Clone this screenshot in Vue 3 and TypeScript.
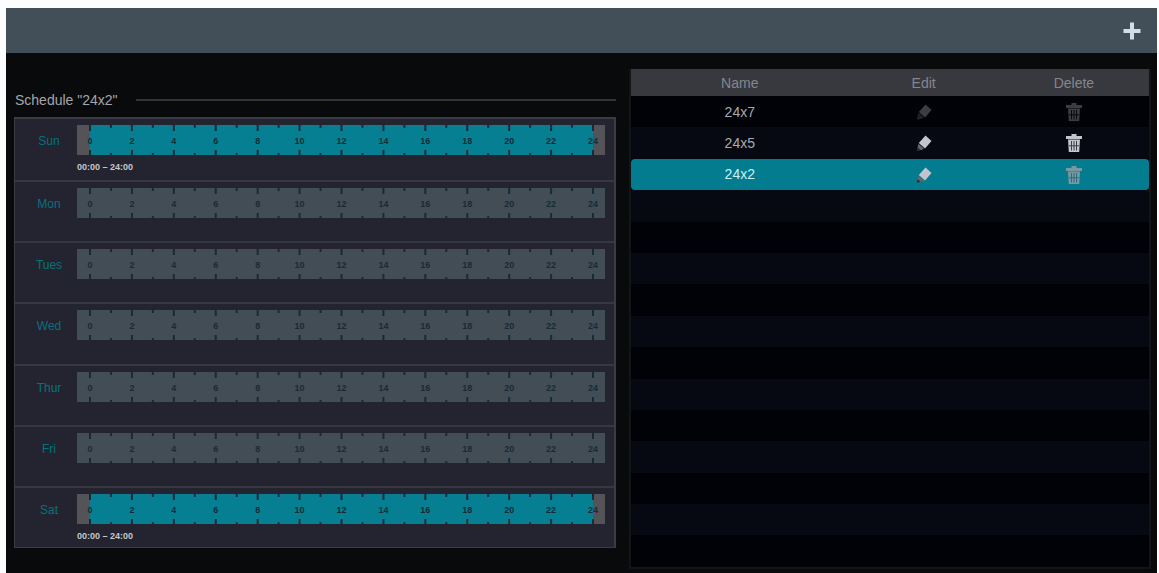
<script setup lang="ts">
import { ref, computed } from 'vue'

interface Day {
  name: string
  range: string
}

interface Schedule {
  name: string
  edit: 'off' | 'on'
  remove: 'off' | 'on' | 'dim'
}

const days: Day[] = [
  { name: 'Sun', range: '00:00 – 24:00' },
  { name: 'Mon', range: '' },
  { name: 'Tues', range: '' },
  { name: 'Wed', range: '' },
  { name: 'Thur', range: '' },
  { name: 'Fri', range: '' },
  { name: 'Sat', range: '00:00 – 24:00' },
]

const schedules: Schedule[] = [
  { name: '24x7', edit: 'off', remove: 'off' },
  { name: '24x5', edit: 'on', remove: 'on' },
  { name: '24x2', edit: 'on', remove: 'dim' },
]

const selected = ref('24x2')
const title = computed(() => `Schedule "${selected.value}"`)
const hours = Array.from({ length: 25 }, (_, i) => i)
const emptyRows = 12

const tickX = (hour: number): string => `${(hour / 24) * 100}%`
</script>

<template>
  <div class="page">
    <header class="topbar">
      <button class="add" type="button" aria-label="Add schedule">
        <svg viewBox="0 0 18 18" width="18" height="18"><path d="M9 0.5V17.5M0.5 9H17.5" /></svg>
      </button>
    </header>

    <main class="content">
      <section class="schedule">
        <h2 class="title"><span>{{ title }}</span></h2>
        <div class="days">
          <div v-for="day in days" :key="day.name" class="day">
            <span class="day-name">{{ day.name }}</span>
            <div class="day-body">
              <div class="bar" :class="{ full: day.range }">
                <div class="scale">
                  <svg class="ticks" width="100%" height="100%" aria-hidden="true">
                    <g v-for="h in hours" :key="h">
                      <line :x1="tickX(h)" :x2="tickX(h)" y1="0" :y2="h % 2 ? 3 : 6" />
                      <line :x1="tickX(h)" :x2="tickX(h)" :y1="h % 2 ? 28 : 25" y2="30" />
                      <text v-if="h % 2 === 0" :x="tickX(h)" y="19">{{ h }}</text>
                    </g>
                  </svg>
                </div>
              </div>
              <span class="range">{{ day.range }}</span>
            </div>
          </div>
        </div>
      </section>

      <table class="list">
        <thead>
          <tr>
            <th class="c-name" scope="col">Name</th>
            <th class="c-edit" scope="col">Edit</th>
            <th class="c-delete" scope="col">Delete</th>
          </tr>
        </thead>
        <tbody>
          <tr
            v-for="s in schedules"
            :key="s.name"
            :class="{ selected: s.name === selected }"
            @click="selected = s.name"
          >
            <td>{{ s.name }}</td>
            <td>
              <button type="button" :class="s.edit" :disabled="s.edit === 'off'" :aria-label="`Edit ${s.name}`">
                <svg viewBox="0 0 16 18" width="16" height="18">
                  <path class="body" d="M9.5 1.5 15.5 7 9 14.5 2.8 9Z" />
                  <path class="tip" d="M2.4 9.8 8 14.8 5.4 16 1 16.6Z" />
                  <path class="lead" d="M1.6 13.2 4.4 16 1 16.6Z" />
                </svg>
              </button>
            </td>
            <td>
              <button type="button" :class="s.remove" :disabled="s.remove === 'off'" :aria-label="`Delete ${s.name}`">
                <svg viewBox="0 0 16 18" width="16" height="18">
                  <path class="body" d="M5.5 0h5v2H16v3H0V2h5.5Z" />
                  <path class="body" d="M2 5.5h12L13.2 18H2.8Z" />
                  <path class="slots" d="M5.5 7V16.5M8 7V16.5M10.5 7V16.5M3 11.8H13" />
                </svg>
              </button>
            </td>
          </tr>
          <tr v-for="n in emptyRows" :key="n">
            <td></td>
            <td></td>
            <td></td>
          </tr>
        </tbody>
      </table>
    </main>
  </div>
</template>

<style>
body {
  margin: 0;
  background: #fdfdfd;
}
</style>

<style scoped>
.page {
  box-sizing: border-box;
  min-height: 100vh;
  padding: 8px 2px 0 6px;
  display: flex;
  flex-direction: column;
  font-family: "Liberation Sans", Arial, sans-serif;
  font-size: 14px;
  color: #a4a6aa;
}

.topbar {
  height: 45px;
  display: flex;
  align-items: center;
  justify-content: flex-end;
  padding-right: 16px;
  background: #434f58;
}

button {
  display: inline-flex;
  padding: 0;
  border: 0;
  background: none;
}

.add path {
  stroke: #d5dde4;
  stroke-width: 4;
  fill: none;
}

.content {
  flex: 1;
  display: grid;
  grid-template-columns: 602fr 522fr;
  column-gap: 13px;
  align-items: start;
  padding: 16px 6px 4px 8px;
  background: #090a0b;
}

.title {
  display: flex;
  align-items: center;
  gap: 18px;
  margin: 0;
  padding: 22px 0 8px 1px;
  font-size: 14px;
  line-height: 18px;
  font-weight: 400;
}

.title::after {
  content: "";
  flex: 1;
  height: 2px;
  background: #343435;
}

.days {
  height: calc(100vh - 142px);
  min-height: 420px;
  box-sizing: border-box;
  display: grid;
  grid-auto-rows: 1fr;
  border: 1px solid #3a3b44;
  border-top-width: 2px;
  border-right-width: 2px;
  background: #23242f;
}

.day {
  display: grid;
  grid-template-columns: 62px 1fr;
  padding: 6px 9px 0 0;
}

.day + .day {
  border-top: 2px solid #363741;
}

.day-name {
  color: #08717f;
  font-size: 12px;
  line-height: 32px;
  text-align: center;
  padding-left: 6px;
}

.bar {
  height: 30px;
  padding: 0 12px 0 13px;
  background: #434d55;
}

.bar.full {
  background: #535358;
}

.full .scale {
  background: #067f92;
}

.scale {
  height: 30px;
}

.ticks {
  display: block;
  overflow: visible;
}

.ticks line {
  stroke: #172b36;
  stroke-width: 2;
}

.ticks text {
  fill: #172b36;
  font-size: 9px;
  font-weight: 700;
  text-anchor: middle;
}

.range {
  display: block;
  margin-top: 6px;
  color: #c6c6cb;
  font-size: 9px;
  font-weight: 700;
  line-height: 12px;
}

.list {
  width: 100%;
  height: calc(100vh - 73px);
  box-sizing: border-box;
  table-layout: fixed;
  border-collapse: separate;
  border-spacing: 0;
  border: 2px solid #131417;
  border-top: 0;
  background: #010207;
}

th {
  height: 27px;
  padding: 0;
  background: #38393f;
  color: #85868d;
  font-weight: 400;
}

.c-name {
  width: 42%;
}

.c-edit {
  width: 29%;
}

.c-delete {
  width: 29%;
}

td {
  height: 31px;
  padding: 0;
  text-align: center;
  color: #a8a9ad;
}

td button {
  vertical-align: middle;
}

tbody tr:nth-child(even) td {
  background: #060912;
}

tbody tr.selected td {
  background: #047c90;
  color: #c9f0f4;
}

.selected td:first-child {
  border-radius: 4px 0 0 4px;
}

.selected td:last-child {
  border-radius: 0 4px 4px 0;
}

.body {
  fill: #c3c5cc;
}

.tip {
  fill: #63666e;
}

.lead {
  fill: #24282e;
}

.slots {
  stroke: #3c3f47;
  stroke-width: 1;
  fill: none;
}

.off .body {
  fill: #3b3d42;
}

.off .tip,
.off .lead {
  fill: #1f2126;
}

.off .slots {
  stroke: #08090e;
}

.dim .body {
  fill: #7899a2;
}

.dim .slots {
  stroke: #2a6f7c;
}
</style>
